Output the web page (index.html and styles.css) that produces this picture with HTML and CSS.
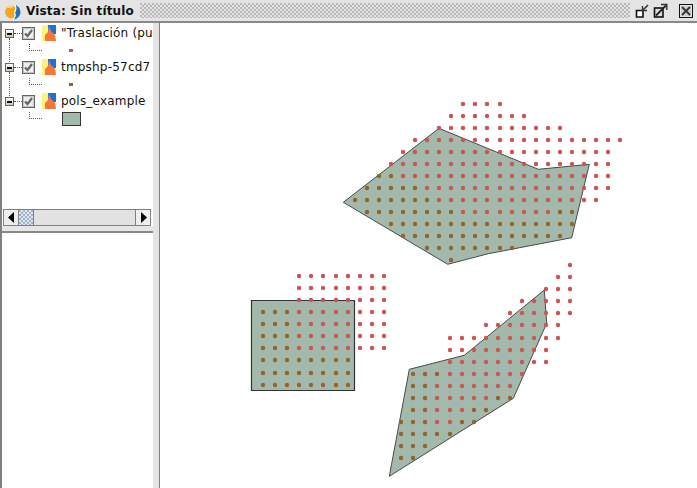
FILE: index.html
```html
<!DOCTYPE html>
<html lang="es">
<head>
    <meta charset="UTF-8">
    <title>Vista: Sin título</title>
    <link rel="stylesheet" href="styles.css">
</head>
<body>
    <div class="titlebar">
        <svg class="app-icon" width="16" height="16" viewBox="0 0 16 16">
            <circle cx="6.5" cy="8" r="6.5" fill="#f5a81c"/>
            <path d="M2 3.5 Q6 0 10 2 Q6 5 2 3.5Z" fill="#fcd97c"/>
            <path d="M10 0.5 Q15.5 3 15.5 8.5 Q15 14 8 16 Q11.5 12 9.5 8.5 Q12 5 10 0.5Z" fill="#1f6fc4"/>
            <path d="M10 0.5 Q12 5 9.5 8.5 Q11.5 12 8 16" fill="none" stroke="#fff" stroke-width="1.2"/>
        </svg>
        <span class="title">Vista: Sin título</span>
        <div class="title-fill"></div>
        <div class="win-buttons">
            <svg width="15" height="15" viewBox="0 0 15 15">
                <path d="M1.5 7.5 V14 H8 V7.5 Z" fill="#fff" stroke="#111" stroke-width="1.6"/>
                <path d="M7 8 L13 2" stroke="#333" stroke-width="1.6"/>
                <path d="M7.5 3 V7.5 H12" fill="none" stroke="#333" stroke-width="1.4"/>
            </svg>
            <svg width="15" height="15" viewBox="0 0 15 15">
                <rect x="1.5" y="5" width="8.5" height="9" fill="#ddd" stroke="#111" stroke-width="1.6"/>
                <path d="M3 12.5 L13 2.5" stroke="#222" stroke-width="1.8"/>
                <path d="M8 1.5 H13.8 V7" fill="none" stroke="#333" stroke-width="1.4"/>
            </svg>
            <svg class="close-btn" width="14" height="14" viewBox="0 0 14 14">
                <rect x="0.5" y="0.5" width="13" height="13" fill="#e4e4e4" stroke="#111"/>
                <rect x="2" y="2" width="10" height="10" fill="#cfcfcf"/>
                <path d="M3 3 L11 11 M11 3 L3 11" stroke="#333" stroke-width="1.8"/>
            </svg>
        </div>
    </div>

    <div class="main">
        <div class="side">
            <div class="tree-pane">
                <ul class="tree">
                    <li class="layer">
                        <div class="layer-head">
                            <span class="handle"></span>
                            <span class="dots-h"></span>
                            <span class="check"><svg width="11" height="11" viewBox="0 0 11 11"><path d="M2 5.5 L4.5 8 L9 2" fill="none" stroke="#666" stroke-width="2.2"/></svg></span>
                            <svg class="layer-icon" width="14" height="16" viewBox="0 0 14 16"><rect width="14" height="16" fill="#fdf27c"/><rect x="6" width="8" height="9" fill="#1c6fe0"/><path d="M3 16 V10 L6 7 L7 1 L9 6 L13 10 L14 16Z" fill="#f5763a"/></svg>
                            <span class="layer-name">"Traslación (pu</span>
                        </div>
                        <div class="legend">
                            <span class="elbow"></span>
                            <span class="sym-point red"></span>
                        </div>
                    </li>
                    <li class="layer">
                        <div class="layer-head">
                            <span class="handle"></span>
                            <span class="dots-h"></span>
                            <span class="check"><svg width="11" height="11" viewBox="0 0 11 11"><path d="M2 5.5 L4.5 8 L9 2" fill="none" stroke="#666" stroke-width="2.2"/></svg></span>
                            <svg class="layer-icon" width="14" height="16" viewBox="0 0 14 16"><rect width="14" height="16" fill="#fdf27c"/><rect x="6" width="8" height="9" fill="#1c6fe0"/><path d="M3 16 V10 L6 7 L7 1 L9 6 L13 10 L14 16Z" fill="#f5763a"/></svg>
                            <span class="layer-name">tmpshp-57cd7</span>
                        </div>
                        <div class="legend">
                            <span class="elbow"></span>
                            <span class="sym-point brown"></span>
                        </div>
                    </li>
                    <li class="layer">
                        <div class="layer-head">
                            <span class="handle"></span>
                            <span class="dots-h"></span>
                            <span class="check"><svg width="11" height="11" viewBox="0 0 11 11"><path d="M2 5.5 L4.5 8 L9 2" fill="none" stroke="#666" stroke-width="2.2"/></svg></span>
                            <svg class="layer-icon" width="14" height="16" viewBox="0 0 14 16"><rect width="14" height="16" fill="#fdf27c"/><rect x="6" width="8" height="9" fill="#1c6fe0"/><path d="M3 16 V10 L6 7 L7 1 L9 6 L13 10 L14 16Z" fill="#f5763a"/></svg>
                            <span class="layer-name">pols_example</span>
                        </div>
                        <div class="legend">
                            <span class="elbow"></span>
                            <span class="sym-poly"></span>
                        </div>
                    </li>
                </ul>
                <div class="scrollbar">
                    <span class="arrow"><svg width="7" height="11" viewBox="0 0 7 11"><path d="M6 0 V11 L0 5.5Z" fill="#000"/></svg></span>
                    <span class="thumb"></span>
                    <span class="track"></span>
                    <span class="arrow"><svg width="7" height="11" viewBox="0 0 7 11"><path d="M1 0 V11 L7 5.5Z" fill="#000"/></svg></span>
                </div>
            </div>
            <div class="split-h"></div>
            <div class="lower-pane"></div>
        </div>
        <div class="split-v"></div>
        <div class="map">
            <svg id="mapSvg" width="537" height="465" viewBox="160 23 537 465">
                <g class="polys">
                    <polygon points="439,128.3 538.3,169.3 589.3,164.3 571.7,237.7 488.3,253.7 447.7,264.3 343.3,202.3"/>
                    <polygon class="box" points="251.5,300.5 354.5,300.5 354.5,390.5 251.5,390.5"/>
                    <polygon points="409.3,369.3 464.3,355.3 544.3,290 546.7,323.3 513.3,398.3 389.3,476.3"/>
                </g>
                <g id="points"></g>
            </svg>
        </div>
    </div>
    <script src="map.js"></script>
</body>
</html>
```

FILE: styles.css
```css
html, body {
    margin: 0;
    padding: 0;
}
body {
    width: 697px;
    height: 488px;
    overflow: hidden;
    background-color: #fff;
    font-family: "DejaVu Sans", sans-serif;
    display: flex;
    flex-direction: column;
}
.titlebar {
    height: 21px;
    display: flex;
    align-items: center;
    background-color: #e4e4e4;
    border-bottom: 2px solid #888;
    flex: none;
}
.app-icon {
    margin-left: 5px;
    margin-top: 2px;
    flex: none;
}
.title {
    margin-left: 5px;
    font-size: 12px;
    font-weight: bold;
    letter-spacing: 0.17px;
    color: #111;
    white-space: nowrap;
}
.title-fill {
    flex: 1;
    height: 15px;
    margin: 0 5px 0 6px;
    background-color: #e4e4e4;
    background-image:
        radial-gradient(circle at 1px 1px, #b8b8b8 1px, transparent 1px),
        radial-gradient(circle at 3px 3px, #b8b8b8 1px, transparent 1px);
    background-size: 4px 4px;
}
.win-buttons {
    display: flex;
    align-items: center;
    gap: 3px;
    padding-right: 4px;
}
.close-btn {
    margin-left: 8px;
}
.main {
    flex: 1;
    display: flex;
    min-height: 0;
}
.side {
    width: 151px;
    border-left: 2px solid #808080;
    display: flex;
    flex-direction: column;
    flex: none;
}
.tree-pane {
    height: 203px;
    display: flex;
    flex-direction: column;
    background-color: #fff;
}
.tree {
    list-style: none;
    margin: 0;
    padding: 0;
    flex: 1;
    overflow: hidden;
}
.layer {
    height: 34px;
    position: relative;
}
.layer:not(:last-child)::before {
    content: "";
    position: absolute;
    left: 7px;
    top: 15px;
    height: 34px;
    border-left: 1px dotted #555;
}
.layer-head {
    height: 20px;
    display: flex;
    align-items: center;
    padding-left: 3px;
    white-space: nowrap;
    overflow: hidden;
}
.handle {
    width: 7px;
    height: 7px;
    border: 1px solid #666;
    background: linear-gradient(#fff, #c8c8b8);
    position: relative;
    z-index: 1;
    flex: none;
}
.handle::after {
    content: "";
    position: absolute;
    left: 1px;
    right: 1px;
    top: 3px;
    height: 2px;
    background-color: #111;
}
.dots-h {
    width: 8px;
    border-top: 1px dotted #555;
    flex: none;
}
.check {
    width: 11px;
    height: 11px;
    border: 1px solid #666;
    box-shadow: inset 0 0 0 1px #c4c4c4;
    background-color: #eee;
    flex: none;
}
.check svg {
    display: block;
}
.layer-icon {
    margin-left: 7px;
    flex: none;
}
.layer-name {
    margin-left: 5px;
    font-size: 12px;
    color: #111;
    letter-spacing: 0.2px;
}
.legend {
    height: 14px;
    display: flex;
    align-items: center;
    padding-left: 27px;
}
.elbow {
    width: 12px;
    height: 6px;
    border-left: 1px dotted #555;
    border-bottom: 1px dotted #555;
    margin-top: -6px;
    flex: none;
}
.sym-point {
    width: 4px;
    height: 3px;
    margin-left: 27px;
    margin-top: 1px;
}
.sym-point.red {
    background-color: #cc5050;
}
.sym-point.brown {
    background-color: #91642f;
}
.sym-poly {
    width: 17px;
    height: 12px;
    margin-left: 20px;
    margin-top: 2px;
    background-color: #a3b9ab;
    border: 1px solid #333;
    flex: none;
}
.scrollbar {
    height: 15px;
    margin: 0 2px 0 1px;
    display: flex;
    border: 1px solid #808080;
    background-color: #e2e2e2;
    flex: none;
}
.arrow {
    width: 14px;
    display: flex;
    align-items: center;
    justify-content: center;
    background-color: #eee;
    flex: none;
}
.thumb {
    width: 14px;
    background-color: #dde6f2;
    background-image:
        radial-gradient(circle at 1px 1px, #a4b0c2 0.7px, transparent 1px),
        radial-gradient(circle at 3px 3px, #a4b0c2 0.7px, transparent 1px);
    background-size: 4px 4px;
    border-left: 1px solid #808080;
    border-right: 1px solid #808080;
    flex: none;
}
.track {
    flex: 1;
    border-right: 1px solid #808080;
}
.split-h {
    height: 5px;
    background-color: #e6e6e6;
    border-bottom: 2px solid #888;
    flex: none;
}
.lower-pane {
    flex: 1;
    background-color: #fff;
}
.split-v {
    width: 6px;
    background-color: #e4e4e4;
    border-right: 1px solid #808080;
    flex: none;
}
.map {
    flex: 1;
    background-color: #fff;
    overflow: hidden;
}
.map svg {
    display: block;
}
.polys polygon {
    fill: #a3b9ab;
    stroke: #4a4a4a;
    stroke-width: 1;
}
.polys .box {
    stroke: #333;
    stroke-width: 1.2;
}
.pt-red {
    fill: #cc5454;
}
.pt-brown {
    fill: #91642f;
}
```

FILE: map.js
```js
// x positions of the three point grids
var topXs = [355, 367, 379, 391, 403, 415, 427, 439, 451, 463, 475, 487, 500, 512, 524, 536, 548, 560, 572, 584, 596, 608, 620];
var leftXs = [263, 275, 287, 299, 311, 323, 336, 348, 360, 372, 384];
var rightXs = [401, 413, 425, 437, 450, 462, 474, 486, 498, 510, 522, 534, 546, 558, 570];

// [y, first x, last x, first red x, last red x] - anything else is brown
var topRows = [
    [104, 463, 500, 463, 500],
    [116, 451, 524, 451, 524],
    [128, 439, 560, 439, 560],
    [140, 415, 620, 415, 620],
    [152, 403, 608, 403, 608],
    [164, 391, 608, 391, 608],
    [176, 379, 608, 403, 608],
    [188, 367, 608, 427, 608],
    [200, 355, 596, 439, 596],
    [212, 367, 572, 463, 548],
    [224, 391, 572, 0, 0],
    [236, 403, 560, 0, 0],
    [248, 427, 512, 0, 0],
    [260, 451, 451, 0, 0]
];
var leftRows = [
    [276, 299, 384, 299, 384],
    [288, 299, 384, 299, 384],
    [300, 299, 384, 299, 384],
    [312, 263, 384, 299, 384],
    [324, 263, 384, 299, 384],
    [336, 263, 384, 299, 384],
    [348, 263, 384, 299, 384],
    [360, 263, 348, 0, 0],
    [373, 263, 348, 0, 0],
    [385, 263, 348, 0, 0]
];
var rightRows = [
    [265, 570, 570, 570, 570],
    [277, 558, 570, 558, 570],
    [289, 546, 570, 546, 570],
    [301, 522, 570, 522, 570],
    [313, 510, 570, 510, 570],
    [325, 486, 558, 486, 558],
    [338, 450, 558, 450, 558],
    [350, 450, 546, 450, 546],
    [362, 450, 546, 450, 546],
    [374, 413, 522, 450, 522],
    [386, 413, 510, 437, 510],
    [398, 413, 510, 437, 486],
    [410, 413, 486, 437, 462],
    [422, 401, 474, 437, 450],
    [434, 401, 450, 0, 0],
    [446, 401, 425, 0, 0],
    [458, 401, 413, 0, 0]
];

var group = document.getElementById('points');

function drawRows(xs, rows) {
    rows.forEach(function(row) {
        xs.forEach(function(x) {
            if (x < row[1] || x > row[2]) return;
            var c = document.createElementNS('http://www.w3.org/2000/svg', 'circle');
            c.setAttribute('cx', x);
            c.setAttribute('cy', row[0]);
            c.setAttribute('r', 2.2);
            c.setAttribute('class', x >= row[3] && x <= row[4] ? 'pt-red' : 'pt-brown');
            group.appendChild(c);
        });
    });
}

drawRows(topXs, topRows);
drawRows(leftXs, leftRows);
drawRows(rightXs, rightRows);
```
